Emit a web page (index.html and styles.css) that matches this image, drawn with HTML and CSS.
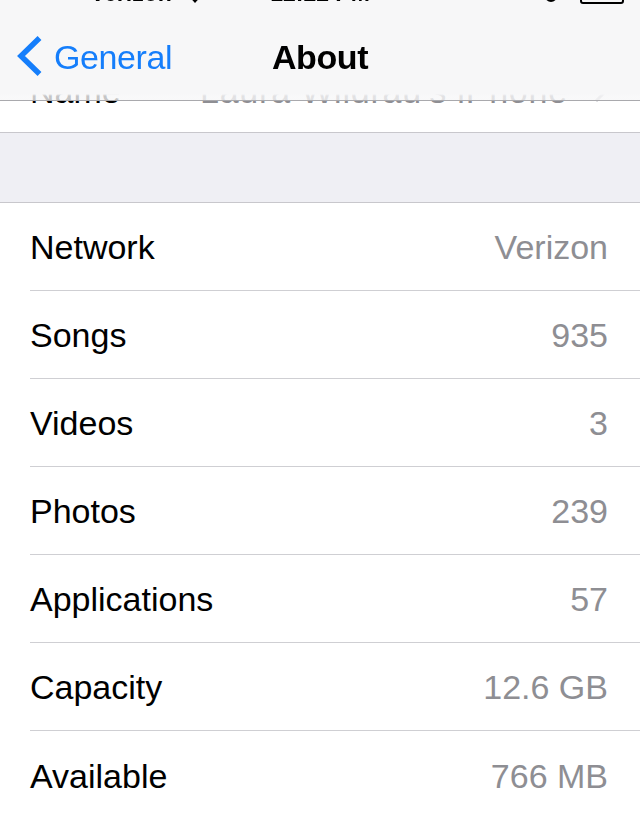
FILE: index.html
```html
<!DOCTYPE html>
<html lang="en">
<head>
<meta charset="utf-8">
<title>About</title>
<link rel="stylesheet" href="styles.css">
</head>
<body>
<header class="topbar">
  <div class="statusbar">
    <div class="sb-left">
      <svg class="signal" width="66" height="12" viewBox="0 0 66 12"><circle cx="6" cy="6" r="5" fill="#000"/><circle cx="19.5" cy="6" r="5" fill="#000"/><circle cx="33" cy="6" r="5" fill="#000"/><circle cx="46.5" cy="6" r="5" fill="#000"/><circle cx="60" cy="6" r="4.5" fill="none" stroke="#000" stroke-width="1.2"/></svg>
      <span class="carrier">Verizon</span>
      <svg class="wifi" width="26" height="20" viewBox="0 0 26 20"><path d="M13 19 L2 7 A16 16 0 0 1 24 7 Z" fill="#000"/></svg>
    </div>
    <div class="sb-time">12:22 PM</div>
    <div class="sb-right">
      <svg class="alarm" width="14" height="20" viewBox="0 0 14 20"><path d="M2 9 A5 5 0 0 1 12 9 V12 A5 5 0 0 1 2 12 Z" fill="none" stroke="#000" stroke-width="2"/></svg>
      <div class="battery"><div class="battery-level"></div></div>
    </div>
  </div>
  <nav class="navbar">
    <a class="back" href="#">
      <svg class="chevron" width="26" height="42" viewBox="0 0 26 42"><path d="M22.5 3 L4 21 L22.5 39" fill="none" stroke="#157efb" stroke-width="5.5"/></svg>
      <span>General</span>
    </a>
    <h1 class="title">About</h1>
    <span class="nav-right"></span>
  </nav>
</header>

<main class="content">
  <section class="group group-first">
    <div class="row">
      <div class="cell cell-last">
        <span class="label">Name</span>
        <span class="value value-link">Laura Wildrau's iPhone</span>
        <svg class="disclosure" width="14" height="24" viewBox="0 0 14 24"><path d="M2 2 L12 12 L2 22" fill="none" stroke="#c7c7cc" stroke-width="3"/></svg>
      </div>
    </div>
  </section>

  <div class="spacer"></div>

  <section class="group">
    <div class="row"><div class="cell"><span class="label">Network</span><span class="value">Verizon</span></div></div>
    <div class="row"><div class="cell"><span class="label">Songs</span><span class="value">935</span></div></div>
    <div class="row"><div class="cell"><span class="label">Videos</span><span class="value">3</span></div></div>
    <div class="row"><div class="cell"><span class="label">Photos</span><span class="value">239</span></div></div>
    <div class="row"><div class="cell"><span class="label">Applications</span><span class="value">57</span></div></div>
    <div class="row"><div class="cell"><span class="label">Capacity</span><span class="value">12.6 GB</span></div></div>
    <div class="row"><div class="cell"><span class="label">Available</span><span class="value">766 MB</span></div></div>
  </section>
</main>
</body>
</html>
```

FILE: styles.css
```css
* {
  box-sizing: border-box;
}

html, body {
  margin: 0;
  padding: 0;
}

body {
  background: #efeff4;
  font-family: "Liberation Sans", Arial, "Helvetica Neue", sans-serif;
  color: #000;
  width: 640px;
  overflow: hidden;
}

/* ---------- top bar (overlay) ---------- */
.topbar {
  position: fixed;
  top: 0;
  left: 0;
  right: 0;
  height: 101px;
  overflow: hidden;
  border-bottom: 1px solid #a9a9ad;
  background: linear-gradient(to bottom, #f7f7f8 0, #f7f7f8 94px, rgba(247, 247, 248, 0.8) 96px, rgba(247, 247, 248, 0.8) 100px);
  z-index: 10;
}

.statusbar {
  height: 40px;
  margin-top: -28px;
  padding-top: 3px;
  display: grid;
  grid-template-columns: 1fr auto 1fr;
  align-items: center;
  font-size: 23px;
  font-weight: bold;
  color: #000;
}

.sb-left {
  display: flex;
  align-items: center;
  padding-left: 12px;
}

.carrier {
  margin-left: 12px;
}

.wifi {
  margin-left: 10px;
}

.sb-time {
  text-align: center;
}

.sb-right {
  display: flex;
  align-items: center;
  justify-content: flex-end;
  padding-right: 16px;
  gap: 22px;
}

.battery {
  width: 44px;
  height: 20px;
  border: 2px solid #000;
  border-radius: 3px;
  padding: 2px;
}

.battery-level {
  width: 70%;
  height: 100%;
  background: #000;
}

.navbar {
  height: 88px;
  display: grid;
  grid-template-columns: 1fr auto 1fr;
  align-items: center;
}

.back {
  display: flex;
  align-items: center;
  padding-left: 17px;
  color: #157efb;
  text-decoration: none;
  font-size: 34px;
  gap: 11px;
  letter-spacing: -0.4px;
}

.back span {
  position: relative;
  top: 1px;
}

.title {
  margin: 0;
  font-size: 34px;
  font-weight: bold;
  letter-spacing: -0.4px;
  position: relative;
  top: 1px;
}

/* ---------- content ---------- */
.content {
  padding-top: 45px;
}

.group {
  background: #fff;
  border-top: 1px solid #c8c7cc;
  border-bottom: 1px solid #c8c7cc;
}

.group-first {
  border-top: none;
}

.spacer {
  height: 69px;
}

.row {
  padding-left: 30px;
}

.cell {
  height: 88px;
  display: flex;
  align-items: center;
  padding: 2px 32px 0 0;
  border-bottom: 1px solid #cfcfd3;
  font-size: 34px;
}

.cell-last {
  height: 87px;
  border-bottom: none;
  padding-top: 5px;
}

.row:last-child .cell {
  border-bottom: none;
}

.label {
  flex: 1;
  color: #000;
}

.value {
  color: #8e8e93;
}

.value-link {
  margin-right: 26px;
  letter-spacing: 0.8px;
}

.disclosure {
  flex: none;
}
```
